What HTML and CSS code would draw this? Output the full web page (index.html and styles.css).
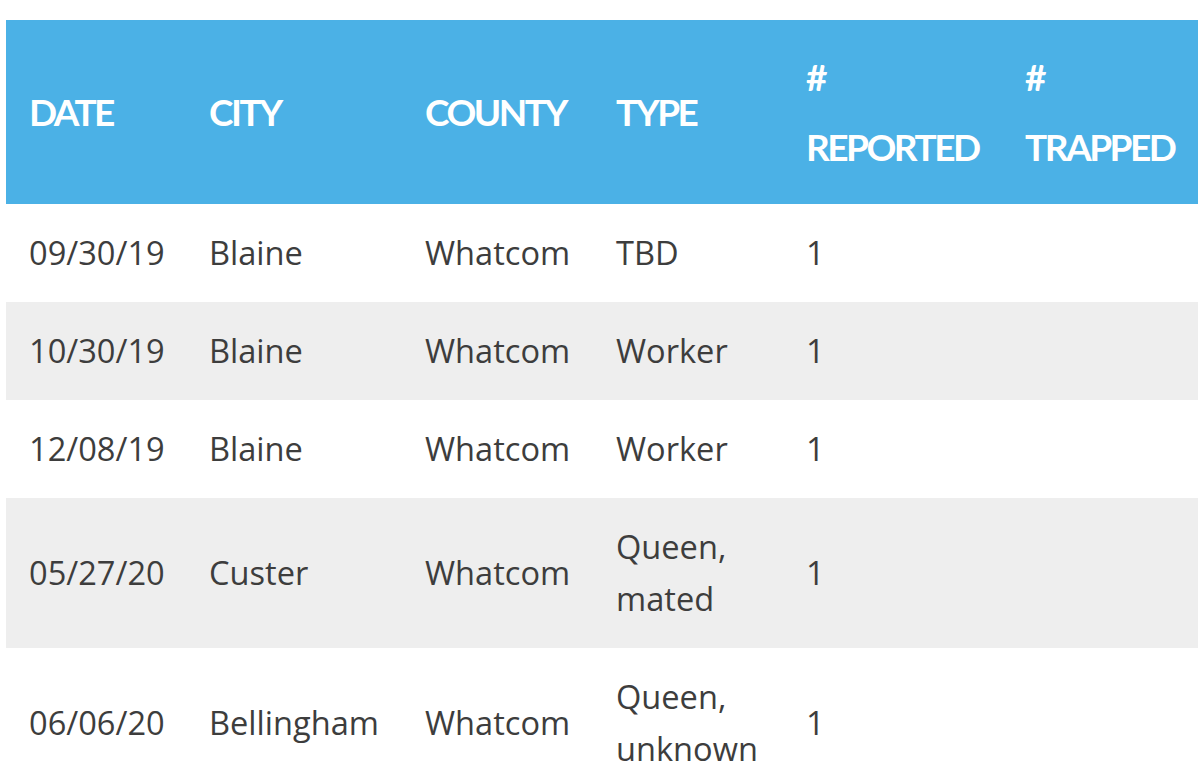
FILE: index.html
```html
<!DOCTYPE html>
<html lang="en">
<head>
<meta charset="utf-8">
<title>Sightings</title>
<link rel="stylesheet" href="styles.css">
</head>
<body>
<table class="sightings">
  <colgroup>
    <col class="c-date"><col class="c-city"><col class="c-county"><col class="c-type"><col class="c-rep"><col class="c-trap">
  </colgroup>
  <thead>
    <tr>
      <th>DATE</th>
      <th>CITY</th>
      <th>COUNTY</th>
      <th>TYPE</th>
      <th># <br>REPORTED</th>
      <th># <br>TRAPPED</th>
    </tr>
  </thead>
  <tbody>
    <tr><td>09/30/19</td><td>Blaine</td><td>Whatcom</td><td>TBD</td><td>1</td><td></td></tr>
    <tr class="alt"><td>10/30/19</td><td>Blaine</td><td>Whatcom</td><td>Worker</td><td>1</td><td></td></tr>
    <tr><td>12/08/19</td><td>Blaine</td><td>Whatcom</td><td>Worker</td><td>1</td><td></td></tr>
    <tr class="alt"><td>05/27/20</td><td>Custer</td><td>Whatcom</td><td>Queen, mated</td><td>1</td><td></td></tr>
    <tr><td>06/06/20</td><td>Bellingham</td><td>Whatcom</td><td>Queen, unknown</td><td>1</td><td></td></tr>
  </tbody>
</table>
</body>
</html>
```

FILE: styles.css
```css
html, body {
  margin: 0;
  padding: 0;
  background: #ffffff;
  overflow: hidden;
}
body {
  padding: 20px 0 0 6px;
}
.sightings {
  border-collapse: collapse;
  table-layout: fixed;
  width: 1192px;
  font-family: "Open Sans", "Liberation Sans", sans-serif;
}
.c-date { width: 180px; }
.c-city { width: 216px; }
.c-county { width: 191px; }
.c-type { width: 190px; }
.c-rep { width: 219px; }
.c-trap { width: 196px; }

.sightings thead th {
  background: #4bb1e6;
  color: #ffffff;
  font-family: "Lato", "Open Sans", sans-serif;
  font-weight: 700;
  font-size: 37px;
  letter-spacing: -2.5px;
  line-height: 70px;
  text-align: left;
  vertical-align: middle;
  height: 184px;
  padding: 0 0 0 23px;
  box-sizing: border-box;
}
.sightings tbody td {
  font-size: 32.6px;
  line-height: 52px;
  color: #3d3d3d;
  padding: 23px 10px 23px 23px;
  vertical-align: middle;
  background: #ffffff;
}
.sightings tbody tr.alt td {
  background: #eeeeee;
}
.sightings tbody td:nth-child(4) {
  padding-right: 30px;
}
```
